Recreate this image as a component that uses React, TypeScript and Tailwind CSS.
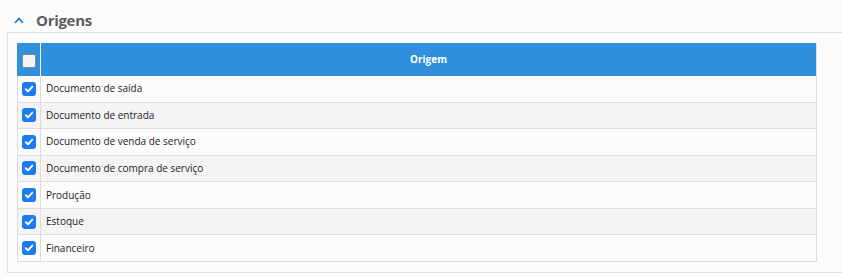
import React from "react";

const rows = [
  "Documento de saída",
  "Documento de entrada",
  "Documento de venda de serviço",
  "Documento de compra de serviço",
  "Produção",
  "Estoque",
  "Financeiro",
];

const Check = ({ checked }: { checked: boolean }) =>
  checked ? (
    <span className="flex h-[14px] w-[14px] items-center justify-center rounded-[3px] bg-[#1a7cf0]">
      <svg width="10" height="10" viewBox="0 0 10 10">
        <path d="M1.8 5.2 L4 7.3 L8.3 2.6" fill="none" stroke="white" strokeWidth="1.9" strokeLinecap="round" strokeLinejoin="round" />
      </svg>
    </span>
  ) : (
    <span className="block h-[14px] w-[14px] rounded-[2px] border border-[#8a8a8a] bg-[#f4f4f4]" />
  );

const App = () => {
  return (
    <div className="h-[278px] w-[842px] bg-[#fcfcfc] font-['Open_Sans',sans-serif]">
      <div className="flex h-[32px] items-center pl-[14px] pt-[8px]">
        <svg width="10" height="7" viewBox="0 0 10 7">
          <path d="M1 5.8 L5 1.6 L9 5.8" fill="none" stroke="#2a7fd4" strokeWidth="1.8" />
        </svg>
        <span className="ml-[12px] text-[15px] font-bold tracking-[-0.3px] text-[#5c5c5c]">Origens</span>
      </div>
      <div className="ml-[7px] h-[241px] border-t border-l border-b border-[#dedede] pt-[10px] pl-[9px] pr-[25px]">
        <div className="border-r border-[#dcdcdc]">
          <div className="flex h-[33px] bg-[#3190dd]">
            <div className="flex w-[24px] items-center justify-center border-r border-white pt-[2px]">
              <Check checked={false} />
            </div>
            <div className="flex flex-1 items-center justify-center text-[10px] font-bold text-white">
              Origem
            </div>
          </div>
          {rows.map((r, i) => (
            <div
              key={r}
              className={`flex h-[26.57px] border-b border-l border-[#dcdcdc] ${i % 2 === 1 ? "bg-[#f4f4f4]" : "bg-[#fcfcfc]"}`}
            >
              <div className="flex w-[23px] items-center justify-center border-r border-[#dcdcdc]">
                <Check checked />
              </div>
              <div className="flex items-center pl-[5px] text-[10px] text-[#222]">{r}</div>
            </div>
          ))}
        </div>
      </div>
    </div>
  );
};

export default App;
